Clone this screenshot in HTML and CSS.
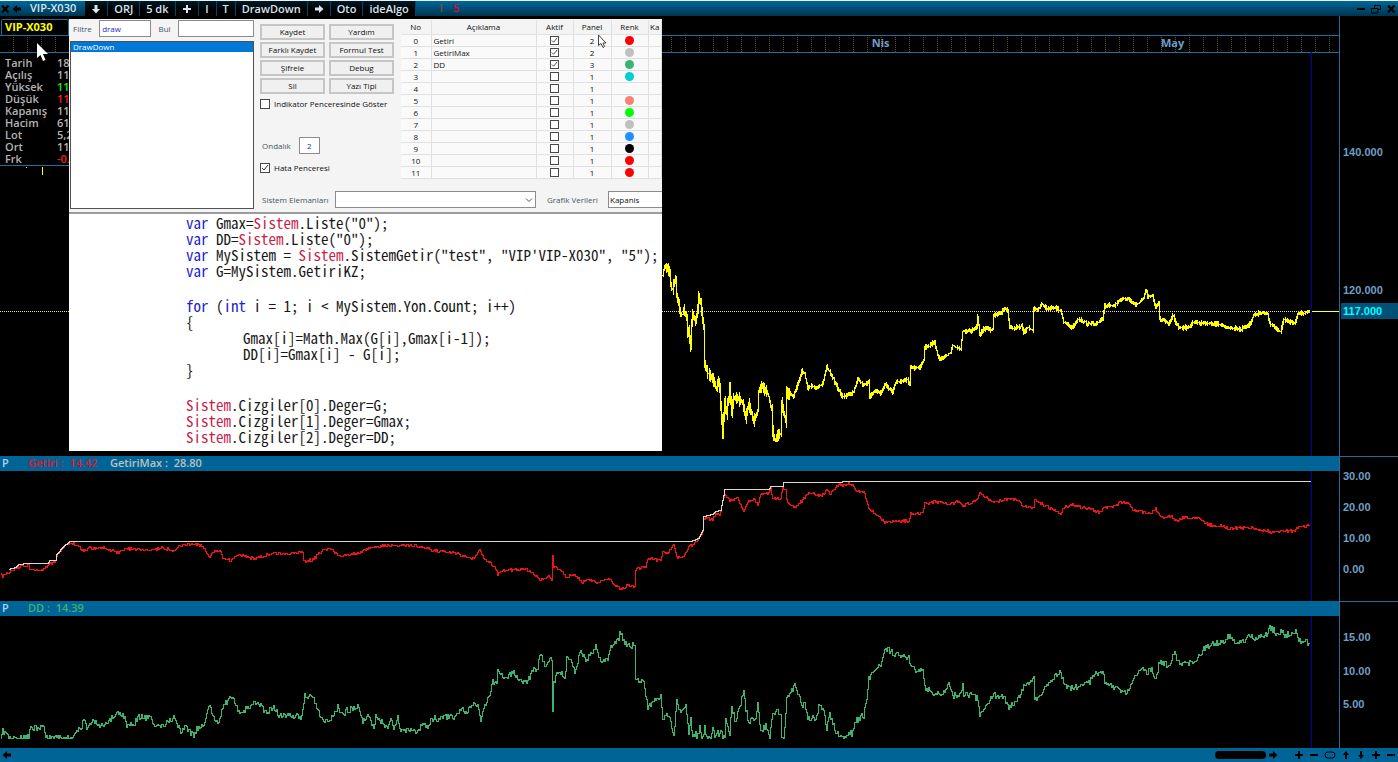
FILE: index.html
```html
<!DOCTYPE html>
<html lang="tr">
<head>
    <meta charset="UTF-8">
    <meta name="viewport" content="width=device-width, initial-scale=1.0">
    <title>VIP-X030 - DrawDown</title>
    <link rel="stylesheet" href="styles.css">
</head>
<body>
    <!-- Shared icons -->
    <svg class="icon-defs" aria-hidden="true">
        <symbol id="arrow-right" viewBox="0 0 10 10"><path d="M1 3.5h4V1l4.5 4L5 9V6.5H1z"/></symbol>
        <symbol id="arrow-left" viewBox="0 0 10 10"><path d="M9 3.5H5V1L.5 5 5 9V6.5h4z"/></symbol>
        <symbol id="arrow-down" viewBox="0 0 10 10"><path d="M3.5 1v4H1l4 4.5L9 5H6.500V1z"/></symbol>
        <symbol id="thin-up" viewBox="0 0 10 10"><path d="M4 9V5H2l3-4 3 4H6v4z"/></symbol>
        <symbol id="thin-down" viewBox="0 0 10 10"><path d="M4 1v4H2l3 4 3-4H6V1z"/></symbol>
        <symbol id="plus" viewBox="0 0 10 10"><path d="M4 1h2v3h3v2H6v3H4V6H1V4h3z"/></symbol>
        <symbol id="minus" viewBox="0 0 10 10"><path d="M1 4h8v2H1z"/></symbol>
        <symbol id="cross" viewBox="0 0 10 10"><path d="M2 1.500 8.500 8.500M8.500 1.500 2 8.500" stroke="currentColor" stroke-width="2.500"/></symbol>
        <symbol id="restore" viewBox="0 0 10 10"><path d="M3.500 4V1.500h6v4H7M.5 4.500H7V9H.5z" fill="none" stroke="currentColor"/></symbol>
        <symbol id="oval" viewBox="0 0 12 10"><rect x="1" y="2" width="10" height="6" rx="3" fill="none" stroke="currentColor"/></symbol>
    </svg>

    <header class="toolbar">
        <button class="icon-btn" aria-label="Kapat"><svg><use href="#cross"/></svg></button>
        <button class="icon-btn" aria-label="Geri"><svg><use href="#arrow-left"/></svg></button>
        <span class="symbol-name">VIP-X030</span>
        <button class="tool-btn" aria-label="Aşağı"><svg><use href="#arrow-down"/></svg></button>
        <button class="tool-btn">ORJ</button>
        <button class="tool-btn">5 dk</button>
        <button class="tool-btn" aria-label="Ekle"><svg><use href="#plus"/></svg></button>
        <button class="tool-btn">I</button>
        <button class="tool-btn">T</button>
        <button class="tool-btn">DrawDown</button>
        <button class="tool-btn" aria-label="İleri"><svg><use href="#arrow-right"/></svg></button>
        <button class="tool-btn">Oto</button>
        <button class="tool-btn">ideAlgo</button>
        <span class="count count-old">1</span>
        <span class="count count-new">5</span>
        <div class="window-buttons">
            <button class="icon-btn" aria-label="Küçült"><svg><use href="#minus"/></svg></button>
            <button class="icon-btn" aria-label="Geri yükle"><svg><use href="#restore"/></svg></button>
            <button class="icon-btn" aria-label="Pencereyi kapat"><svg><use href="#cross"/></svg></button>
        </div>
    </header>

    <main class="panes">
        <section class="pane pane-price">
            <div class="chart">
                <div class="tabs"><span class="tab">VIP-X030</span></div>
                <div class="time-strip"></div>
                <span class="month" style="left: 65.100%">Nis</span>
                <span class="month" style="left: 86.700%">May</span>
                <svg class="plot" viewBox="0 16 1339 440" preserveAspectRatio="none">
                    <path class="cursor-line" d="M1311.500 52V456"/>
                    <path class="last-dotted" d="M0 311.500H1310"/>
                    <path class="last-solid" d="M1312 311.500H1339"/>
                    <path class="line-price" d="M42.500 167V175M26.500 167V168"/>
                    <path class="line-price" id="price"/>
                </svg>

                <table class="quote">
                    <tr><th>Tarih</th><td>18</td></tr>
                    <tr><th>Açılış</th><td>11</td></tr>
                    <tr><th>Yüksek</th><td class="up">11</td></tr>
                    <tr><th>Düşük</th><td class="down">11</td></tr>
                    <tr><th>Kapanış</th><td>11</td></tr>
                    <tr><th>Hacim</th><td>61</td></tr>
                    <tr><th>Lot</th><td>5,2</td></tr>
                    <tr><th>Ort</th><td>11</td></tr>
                    <tr><th>Frk</th><td class="down">-0.</td></tr>
                </table>

                <svg class="pointer pointer-main" viewBox="0 0 12 19"><path d="M1 0v15l3.500-3 2.500 6 2.500-1-2.500-6h5z" fill="#fff"/></svg>

                <div class="editor">
                    <div class="editor-form">
                        <div class="formulas">
                            <div class="search-row">
                                <label for="filtre">Filtre</label>
                                <input type="text" id="filtre" class="filter-input" value="draw">
                                <label for="bul">Bul</label>
                                <input type="text" id="bul" class="find-input">
                            </div>
                            <ul class="formula-list">
                                <li class="selected">DrawDown</li>
                            </ul>
                        </div>
                        <div class="settings">
                            <div class="settings-top">
                                <div class="actions">
                                    <div class="buttons">
                                        <button>Kaydet</button>
                                        <button>Yardım</button>
                                        <button>Farklı Kaydet</button>
                                        <button>Formul Test</button>
                                        <button>Şifrele</button>
                                        <button>Debug</button>
                                        <button>Sil</button>
                                        <button>Yazı Tipi</button>
                                    </div>
                                    <label class="check"><input type="checkbox">Indikator Penceresinde Göster</label>
                                    <div class="decimal">
                                        <label for="ondalik">Ondalık</label>
                                        <input type="text" id="ondalik" value="2">
                                    </div>
                                    <label class="check"><input type="checkbox" checked>Hata Penceresi</label>
                                </div>
                                <table class="lines">
                                    <thead>
                                        <tr>
                                            <th class="col-no">No</th>
                                            <th class="col-name">Açıklama</th>
                                            <th class="col-active">Aktif</th>
                                            <th class="col-panel">Panel</th>
                                            <th class="col-color">Renk</th>
                                            <th class="col-width">Ka</th>
                                        </tr>
                                    </thead>
                                    <tbody id="line-rows"></tbody>
                                </table>
                            </div>
                            <div class="source-row">
                                <label for="elemanlar">Sistem Elemanları</label>
                                <select id="elemanlar" class="elements"><option></option></select>
                                <label for="veriler">Grafik Verileri</label>
                                <select id="veriler" class="data"><option>Kapanis</option></select>
                            </div>
                        </div>
                    </div>
                    <div class="code">
<pre><i>var</i> Gmax=<b>Sistem</b>.Liste("0");
<i>var</i> DD=<b>Sistem</b>.Liste("0");
<i>var</i> MySistem = <b>Sistem</b>.SistemGetir("test", "VIP'VIP-X030", "5");
<i>var</i> G=MySistem.GetiriKZ;</pre>
<pre><i>for</i> (<i>int</i> i = 1; i &lt; MySistem.Yon.Count; i++)
{
<span class="indent">Gmax[i]=Math.Max(G[i],Gmax[i-1]);</span>
<span class="indent">DD[i]=Gmax[i] - G[i];</span>
}</pre>
<pre><b>Sistem</b>.Cizgiler[0].Deger=G;
<b>Sistem</b>.Cizgiler[1].Deger=Gmax;
<b>Sistem</b>.Cizgiler[2].Deger=DD;</pre>
                    </div>
                    <svg class="pointer pointer-small" viewBox="0 0 9 14"><path d="M.5 1v10.500l2.500-2 2 4 1.500-1-1.500-3.500h3z" fill="#fff" stroke="#444"/></svg>
                </div>
            </div>
            <div class="axis">
                <span class="tick" style="top: 31%">140.000</span>
                <span class="tick" style="top: 62.300%">120.000</span>
                <span class="tick last" style="top: 67%">117.000</span>
            </div>
        </section>

        <section class="pane pane-getiri">
            <div class="chart">
                <div class="pane-bar">
                    <span class="p">P</span>
                    <span class="getiri">Getiri :&nbsp; 14.42</span>
                    <span class="getiri-max">GetiriMax :&nbsp; 28.80</span>
                </div>
                <svg class="plot" viewBox="0 471 1339 130" preserveAspectRatio="none">
                    <path class="cursor-line" d="M1311.500 471V601"/>
                    <path class="line-getiri" id="getiri"/>
                    <path class="line-max" id="getirimax"/>
                </svg>
            </div>
            <div class="axis">
                <span class="tick" style="top: 13.500%">30.00</span>
                <span class="tick" style="top: 35%">20.00</span>
                <span class="tick" style="top: 56.200%">10.00</span>
                <span class="tick" style="top: 77.700%">0.00</span>
            </div>
        </section>

        <section class="pane pane-dd">
            <div class="chart">
                <div class="pane-bar">
                    <span class="p">P</span>
                    <span class="dd">DD :&nbsp; 14.39</span>
                </div>
                <svg class="plot" viewBox="0 616 1339 132" preserveAspectRatio="none">
                    <path class="cursor-line" d="M1311.500 616V748"/>
                    <path class="line-dd" id="dd"/>
                </svg>
            </div>
            <div class="axis">
                <span class="tick" style="top: 24.200%">15.00</span>
                <span class="tick" style="top: 47.300%">10.00</span>
                <span class="tick" style="top: 70%">5.00</span>
            </div>
        </section>
    </main>

    <footer class="scrollbar">
        <button class="icon-btn" aria-label="Sola kaydır"><svg><use href="#arrow-left"/></svg></button>
        <div class="track"><div class="thumb"></div></div>
        <button class="icon-btn" aria-label="Sağa kaydır"><svg><use href="#arrow-right"/></svg></button>
        <div class="zoom-buttons">
            <button class="icon-btn" aria-label="Yakınlaştır"><svg><use href="#plus"/></svg></button>
            <button class="icon-btn" aria-label="Uzaklaştır"><svg><use href="#minus"/></svg></button>
            <button class="icon-btn wide" aria-label="Sıfırla"><svg><use href="#oval"/></svg></button>
            <button class="icon-btn" aria-label="Yukarı"><svg><use href="#thin-up"/></svg></button>
            <button class="icon-btn" aria-label="Aşağı kaydır"><svg><use href="#thin-down"/></svg></button>
            <button class="icon-btn" aria-label="Büyüt"><svg><use href="#plus"/></svg></button>
            <button class="icon-btn" aria-label="Daralt"><svg><use href="#minus"/></svg></button>
        </div>
    </footer>
    <script src="script.js"></script>
</body>
</html>
```
FILE: styles.css
```css
* {
    box-sizing: border-box;
}
body {
    margin: 0;
    min-height: 100vh;
    display: flex;
    flex-direction: column;
    overflow: hidden;
    background: #000;
    color: #c0c0c0;
    font-family: "Open Sans", "Noto Sans", sans-serif;
    font-size: 11px;
    font-weight: 600;
    line-height: 12px;
}
button, input, select {
    font: inherit;
    color: inherit;
    margin: 0;
    padding: 0;
}
.icon-defs {
    position: absolute;
    width: 0;
    height: 0;
}

/* Toolbar */
.toolbar {
    display: flex;
    align-items: stretch;
    height: 16px;
    border-top: 1px solid #e8f4f8;
    background: linear-gradient(#00679a, #00344e);
    color: #d6e6f2;
}
.icon-btn {
    display: flex;
    align-items: center;
    justify-content: center;
    width: 14px;
    border: none;
    background: none;
    color: #000;
}
.icon-btn svg, .tool-btn svg {
    width: 10px;
    height: 10px;
    fill: currentColor;
}
.icon-btn.wide, .icon-btn.wide svg {
    width: 16px;
}
.toolbar > .icon-btn:first-child {
    width: 10px;
}
.symbol-name {
    padding: 1px 9px 0 6px;
}
.tool-btn {
    display: flex;
    align-items: center;
    justify-content: center;
    min-width: 18px;
    padding: 0 6px;
    border: none;
    border-right: 1px solid #00456a;
    background: linear-gradient(#001a28, #000 60%);
}
.count {
    padding: 1px 0 0 9px;
}
.count-old {
    padding-left: 22px;
    color: #7a4a3c;
}
.count-new {
    color: #c8143c;
}
.window-buttons {
    display: flex;
    gap: 1px;
    margin-left: auto;
}

/* Panes */
.panes {
    flex: 1;
    display: flex;
    flex-direction: column;
}
.pane {
    flex: 1 1 0;
    display: grid;
    grid-template-columns: 1fr 59px;
}
.pane-price {
    flex-grow: 440;
    min-height: 440px;
}
.pane-getiri {
    flex-grow: 145;
}
.pane-dd {
    flex-grow: 147;
}
.chart {
    position: relative;
    display: flex;
    flex-direction: column;
    min-width: 0;
}
.plot {
    flex: 1;
    width: 100%;
    min-height: 0;
    display: block;
}
.pane-price .plot {
    position: absolute;
    inset: 0;
    height: 100%;
}
.plot path {
    fill: none;
    stroke-width: 1px;
    vector-effect: non-scaling-stroke;
    shape-rendering: crispEdges;
}
.plot .cursor-line {
    stroke: #0000a8;
}
.plot .last-dotted {
    stroke: #e6e67a;
    stroke-dasharray: 1 1;
}
.plot .last-solid {
    stroke: #ffff40;
}
.plot .line-price {
    stroke: #ff0;
}
.plot .line-getiri {
    stroke: #f01414;
}
.plot .line-max {
    stroke: #d8d8d0;
}
.plot .line-dd {
    stroke: #3cb371;
}
.pane-bar {
    display: flex;
    height: 15px;
    padding-left: 2px;
    background: #006496;
    line-height: 14px;
}
.p {
    width: 26px;
    color: #a8d4f8;
}
.getiri {
    width: 82px;
    color: #e01428;
}
.dd {
    color: #3cb371;
}
.axis {
    position: relative;
    border-left: 1px solid #2a6a94;
    color: #6f9fc8;
    font-family: "Liberation Sans", Arial, sans-serif;
    font-weight: 700;
}
.pane-getiri .axis, .pane-dd .axis {
    border-top: 1px solid #2a6a94;
}
.tick {
    position: absolute;
    left: 3px;
    transform: translateY(-50%);
}
.tick.last {
    left: 1px;
    right: 0;
    padding: 2px;
    background: #005078;
    color: #00ffff;
}

/* Price pane header */
.tabs {
    display: flex;
    height: 20px;
    padding: 3px 1px 0;
    border-bottom: 1px solid #1e6e9c;
}
.tab {
    width: 68px;
    padding-left: 3px;
    border: 1px solid #1e6e9c;
    border-bottom: none;
    border-radius: 2px 2px 0 0;
    color: #ff0;
    font-weight: 700;
    line-height: 14px;
}
.time-strip {
    height: 17px;
    border-bottom: 1px solid #1e6e9c;
    background: repeating-linear-gradient(#000 0 1px, transparent 1px 2px), repeating-linear-gradient(90deg, #000 0 13px, #55553c 13px 14px);
}
.month {
    position: absolute;
    top: 21px;
    color: #6f9fc8;
    font-weight: 700;
}
.quote {
    position: absolute;
    left: 0;
    top: 41px;
    width: 69px;
    border-collapse: collapse;
    border-bottom: 1px solid #1e6e9c;
    color: #b4b4b4;
    table-layout: fixed;
}
.quote th, .quote td {
    height: 12px;
    padding: 0 0 0 5px;
    text-align: left;
    font-weight: 600;
    white-space: nowrap;
}
.quote th {
    width: 57px;
}
.quote td {
    padding: 0;
}
.quote .up {
    color: #14f014;
}
.quote .down {
    color: #f02020;
}
.pointer {
    position: absolute;
}
.pointer-main {
    left: 36px;
    top: 27px;
    width: 12px;
    height: 19px;
}
.pointer-small {
    left: 529px;
    top: 15px;
    width: 9px;
    height: 14px;
}

/* Formula editor */
.editor {
    position: absolute;
    left: 69px;
    top: 3px;
    width: 593px;
    overflow: hidden;
    background: #fff;
    color: #101010;
    font-size: 8px;
    font-weight: 400;
}
.editor-form {
    display: grid;
    grid-template-columns: 186px 1fr;
    height: 195px;
    border-bottom: 2px solid #9c9c9c;
    background: #f4f4f4;
}
.editor input[type="text"], .editor select {
    border: 1px solid #8c8c8c;
    border-radius: 0;
    background: #fff;
}
.editor input[type="text"] {
    color: #2828c8;
}
.search-row label, .decimal label, .source-row label {
    color: #46565e;
}
.formulas {
    display: flex;
    flex-direction: column;
    gap: 4px;
    padding: 1px 1px 3px;
}
.search-row {
    display: flex;
    align-items: center;
    justify-content: space-between;
    padding-left: 3px;
}
.search-row input {
    height: 17px;
    padding-left: 2px;
}
.filter-input {
    width: 52px;
}
.find-input {
    width: 76px;
}
.formula-list {
    flex: 1;
    margin: 0;
    padding: 0;
    border: 1px solid #505050;
    background: #fff;
    list-style: none;
}
.formula-list li {
    height: 10px;
    padding-left: 2px;
    line-height: 10px;
}
.formula-list .selected {
    background: #0078d7;
    color: #fff;
}
.settings {
    display: flex;
    flex-direction: column;
    justify-content: space-between;
    min-width: 0;
    padding: 1px 0 4px 5px;
}
.settings-top {
    display: flex;
    gap: 7px;
}
.actions {
    flex: none;
    width: 134px;
    padding-top: 4px;
}
.buttons {
    display: grid;
    grid-template-columns: 1fr 1fr;
    gap: 2px 4px;
    margin-bottom: 4px;
}
.buttons button {
    height: 16px;
    border: 2px solid #c6c6c6;
    background: #f0f0f0;
    white-space: nowrap;
}
.check {
    display: flex;
    align-items: center;
    gap: 4px;
    height: 12px;
    white-space: nowrap;
}
input[type="checkbox"] {
    appearance: none;
    flex: none;
    width: 10px;
    height: 10px;
    border: 1px solid #484848;
    background: #fff;
}
input[type="checkbox"]:checked {
    background-image: url("data:image/svg+xml,%3Csvg xmlns='http://www.w3.org/2000/svg' viewBox='0 0 8 8'%3E%3Cpath d='M1 4l2 2 4-5' fill='none' stroke='%23333'/%3E%3C/svg%3E");
}
.decimal {
    display: flex;
    align-items: center;
    gap: 8px;
    padding: 27px 0 8px 2px;
}
.decimal input {
    width: 21px;
    height: 17px;
    text-align: center;
}
.lines {
    flex: none;
    align-self: flex-start;
    width: 261px;
    border-collapse: collapse;
    table-layout: fixed;
}
.lines th, .lines td {
    height: 12px;
    padding: 0;
    border-right: 1px solid #e0e0e0;
    border-bottom: 1px solid #e0e0e0;
    font-weight: 400;
    line-height: 11px;
    text-align: center;
}
.lines th {
    height: 14px;
}
.lines td {
    background: #fafafa;
}
.lines td:nth-child(2) {
    padding-left: 2px;
    text-align: left;
}
.lines input {
    display: block;
    width: 9px;
    height: 9px;
    margin: 0 auto;
}
.col-no { width: 30px; }
.col-name { width: 105px; }
.col-active { width: 37px; }
.col-panel { width: 38px; }
.col-color { width: 37px; }
.dot {
    display: block;
    width: 9px;
    height: 9px;
    margin: 0 auto;
    border-radius: 50%;
}
.source-row {
    display: flex;
    align-items: center;
    padding-left: 2px;
    white-space: nowrap;
}
.source-row select {
    flex: none;
    height: 17px;
    appearance: none;
}
.source-row label {
    flex: none;
    width: 73px;
}
.source-row .elements {
    width: 201px;
    margin-right: 11px;
    background: #fff url("data:image/svg+xml,%3Csvg xmlns='http://www.w3.org/2000/svg' viewBox='0 0 8 8'%3E%3Cpath d='M1 2.500l3 3 3-3' fill='none' stroke='%23555'/%3E%3C/svg%3E") no-repeat right 2px center / 8px 8px;
}
.source-row .elements + label {
    width: 61px;
}
.source-row .data {
    width: 80px;
    padding-left: 1px;
}
.code {
    display: flex;
    flex-direction: column;
    gap: 19px;
    padding: 1px 0 6px 117px;
    color: #181818;
    font-size: 15px;
    line-height: 16px;
}
.code pre {
    margin: 0;
    font-family: "Noto Sans Mono CJK SC", "DejaVu Sans Mono", monospace;
}
.code i {
    color: #2020d0;
    font-style: normal;
}
.code b {
    color: #c81e46;
    font-weight: 400;
}
.indent {
    padding-left: 57px;
}

/* Bottom bar */
.scrollbar {
    display: flex;
    height: 14px;
    background: #006496;
}
.track {
    flex: 1;
    display: flex;
    align-items: center;
    justify-content: flex-end;
}
.thumb {
    width: 51px;
    height: 8px;
    border-radius: 4px;
    background: #000;
}
.zoom-buttons {
    display: flex;
    gap: 1px;
    margin-left: 12px;
}
```
FILE: script.js
```js
// Rows of the line table
const lines = [
    ['Getiri', true, 2, '#ff0000'],
    ['GetiriMax', true, 2, '#c0c0c0'],
    ['DD', true, 3, '#3cb371'],
    ['', false, 1, '#00ced1'],
    ['', false, 1, 'transparent'],
    ['', false, 1, '#fa8072'],
    ['', false, 1, '#00ff00'],
    ['', false, 1, '#c0c0c0'],
    ['', false, 1, '#1e90ff'],
    ['', false, 1, '#000000'],
    ['', false, 1, '#ff0000'],
    ['', false, 1, '#ff0000']
];

document.getElementById('line-rows').innerHTML = lines.map((line, i) => `
    <tr>
        <td>${i}</td>
        <td>${line[0]}</td>
        <td><input type="checkbox" aria-label="Aktif ${i}" ${line[1] ? 'checked' : ''}></td>
        <td>${line[2]}</td>
        <td><span class="dot" style="background: ${line[3]}"></span></td>
        <td></td>
    </tr>`).join('');

const price = '662,275 664,265 667,268 669,271 670,284 672,290 674,280 676,276 676,296 678,304 680,313 682,314 683,308 686,318 687,333 688,330 689,338 690,348 691,322 692,314 695,320 697,307 698,297 700,303 703,327 704,363 707,373 713,379 716,390 717,379 719,387 720,407 722,432 724,402 726,413 729,388 731,411 733,397 738,398 742,403 745,417 748,403 753,421 757,410 758,391 761,385 767,393 771,410 772,430 774,439 780,432 781,402 785,420 786,392 788,393 793,395 797,385 801,371 804,373 807,387 812,385 815,388 822,383 826,366 830,373 835,383 842,397 847,394 853,392 857,378 863,385 868,381 869,397 875,390 880,393 884,384 888,387 892,392 895,382 902,380 907,379 909,383 910,366 913,367 920,366 923,360 924,347 927,346 934,342 937,355 940,358 950,353 952,345 960,348 962,331 970,330 976,327 977,316 979,334 985,327 992,330 993,315 1000,312 1005,307 1007,310 1009,327 1015,327 1021,325 1023,332 1028,327 1032,330 1033,308 1037,310 1041,304 1047,308 1052,307 1060,310 1063,322 1072,327 1078,319 1087,323 1095,323 1102,318 1104,305 1113,305 1120,299 1128,298 1135,305 1143,298 1145,290 1147,296 1152,295 1155,307 1158,302 1159,318 1168,323 1172,315 1178,327 1187,327 1193,322 1207,323 1220,324 1227,327 1240,329 1250,323 1253,315 1260,312 1267,313 1269,323 1280,332 1283,319 1294,322 1297,314 1309,311';

const getiri = '0,572 2,576 7,573 15,568 20,565 28,565 29,568 42,569 47,565 55,561 57,554 62,547 69,542 77,545 83,551 88,548 100,547 117,552 127,548 150,550 160,547 173,550 180,545 193,543 203,547 209,556 215,550 219,550 222,557 230,560 240,554 253,558 273,553 283,553 302,552 303,561 312,559 322,550 330,549 340,556 353,553 360,552 367,548 383,545 400,545 415,545 420,547 427,547 430,550 453,552 462,556 473,558 479,550 483,557 490,563 495,568 497,574 502,570 525,568 533,573 540,580 547,576 551,579 552,554 553,566 563,573 566,578 572,573 582,582 587,578 595,583 600,580 607,578 613,583 620,589 627,585 634,586 635,569 645,566 648,557 660,561 662,552 668,552 673,543 676,557 683,556 688,547 693,543 698,538 702,532 703,518 712,519 715,513 719,515 722,500 724,495 730,500 737,498 743,511 747,501 753,498 757,505 760,494 768,493 770,488 772,498 780,499 782,486 785,490 786,500 793,507 802,500 808,492 820,496 826,490 830,493 837,485 850,483 855,489 864,493 868,508 875,513 884,522 908,520 910,513 922,512 924,503 940,501 948,504 957,501 962,505 976,500 979,493 992,502 1008,498 1018,500 1023,506 1033,508 1034,500 1060,513 1063,507 1073,504 1100,512 1104,507 1115,505 1120,502 1128,503 1132,509 1150,513 1155,508 1160,517 1170,516 1175,520 1183,517 1197,518 1207,524 1223,526 1228,528 1250,527 1267,530 1270,533 1282,530 1293,531 1297,527 1309,525';

const getiriMax = '8,569 15,567 18,564 26,563 47,563 49,560 55,560 56,554 62,547 69,541 690,541 698,538 702,530 703,516 712,514 715,511 720,510 722,500 724,489 768,489 770,486 782,486 783,482 840,482 842,481 1310,481';

const dd = '0,738 2,725 3,732 8,737 20,738 28,737 29,727 37,728 42,724 45,737 72,738 77,729 80,731 83,717 86,727 92,721 102,726 112,717 117,714 124,716 126,724 133,723 138,717 150,717 153,725 160,726 173,718 180,732 185,726 193,736 197,727 202,726 209,705 213,718 219,721 221,707 230,697 235,703 238,712 247,708 253,700 262,706 264,713 273,707 278,715 301,716 304,695 312,697 317,710 323,722 330,719 337,707 343,717 345,710 357,707 362,722 367,713 373,727 375,717 382,722 387,730 390,717 393,727 397,717 400,731 413,727 416,733 422,723 427,728 430,718 442,718 448,715 453,718 462,707 465,712 474,701 477,705 480,722 483,705 489,697 492,681 496,683 497,667 503,678 513,672 518,680 526,683 533,667 537,670 539,653 545,667 551,657 552,712 553,682 558,670 564,678 566,658 572,663 574,672 580,650 585,660 595,647 600,660 606,661 610,648 618,637 620,631 622,640 630,647 634,643 635,678 643,682 647,707 653,700 660,695 662,717 668,713 673,736 676,700 680,713 685,705 688,733 690,717 692,738 695,732 696,738 699,727 701,737 704,728 706,738 710,737 712,725 714,737 716,730 718,735 720,729 722,738 724,736 725,720 729,732 731,707 735,722 740,702 743,691 745,710 748,720 755,720 757,705 760,732 765,725 769,738 772,711 780,712 781,737 783,738 786,700 794,685 802,707 804,702 807,718 815,717 818,707 822,708 826,727 829,715 835,730 843,738 852,732 855,720 863,715 866,700 868,677 880,663 884,647 893,653 907,657 908,652 910,668 922,671 924,688 940,695 948,685 952,696 960,693 962,681 963,693 976,697 979,713 987,702 993,694 1003,697 1008,706 1017,700 1022,687 1033,678 1034,700 1060,670 1063,685 1073,688 1080,683 1088,682 1095,673 1103,672 1104,685 1115,686 1122,693 1128,691 1132,678 1142,668 1146,673 1151,667 1155,680 1159,660 1168,665 1174,653 1177,662 1188,663 1198,657 1203,648 1212,643 1223,642 1228,635 1232,641 1243,640 1250,635 1255,640 1267,633 1269,627 1273,630 1278,635 1282,628 1283,635 1295,632 1297,640 1309,643';

let seed = 7;
function random() {
    seed = (seed * 1103515245 + 12345) % 2147483648;
    return seed / 2147483648;
}

// One value per pixel column, with tick noise on top
function samples(text, noise) {
    const points = text.split(' ').map(p => p.split(',').map(Number));
    const result = [];
    for (let i = 1; i < points.length; i++) {
        const [x0, y0] = points[i - 1];
        const [x1, y1] = points[i];
        for (let x = x0; x < x1; x++) {
            const y = y0 + (y1 - y0) * (x - x0) / (x1 - x0);
            result.push([x, Math.round(y + (random() - 0.5) * noise)]);
        }
    }
    result.push(points[points.length - 1]);
    return result;
}

function stepPath(text, noise, limit) {
    const list = samples(text, noise);
    return list.map(([x, y], i) => {
        y = Math.min(y, limit) + 0.5;
        return i ? `H${x + 0.5}V${y}` : `M${x + 0.5} ${y}`;
    }).join('');
}

// High-low bar for each pixel column
function barPath(text) {
    const list = samples(text, 2);
    return list.map(([x, y], i) => {
        const prev = i ? list[i - 1][1] : y;
        const spread = (x < 790 ? 6 : 2) * random();
        const high = Math.min(y, prev) - spread;
        const low = Math.max(y, prev) + 1 + spread;
        return `M${x + 0.5} ${high.toFixed(1)}V${low.toFixed(1)}`;
    }).join('');
}

document.getElementById('price').setAttribute('d', barPath(price));
document.getElementById('getiri').setAttribute('d', stepPath(getiri, 3, 600));
document.getElementById('getirimax').setAttribute('d', stepPath(getiriMax, 0, 600));
document.getElementById('dd').setAttribute('d', stepPath(dd, 6, 738));
```
